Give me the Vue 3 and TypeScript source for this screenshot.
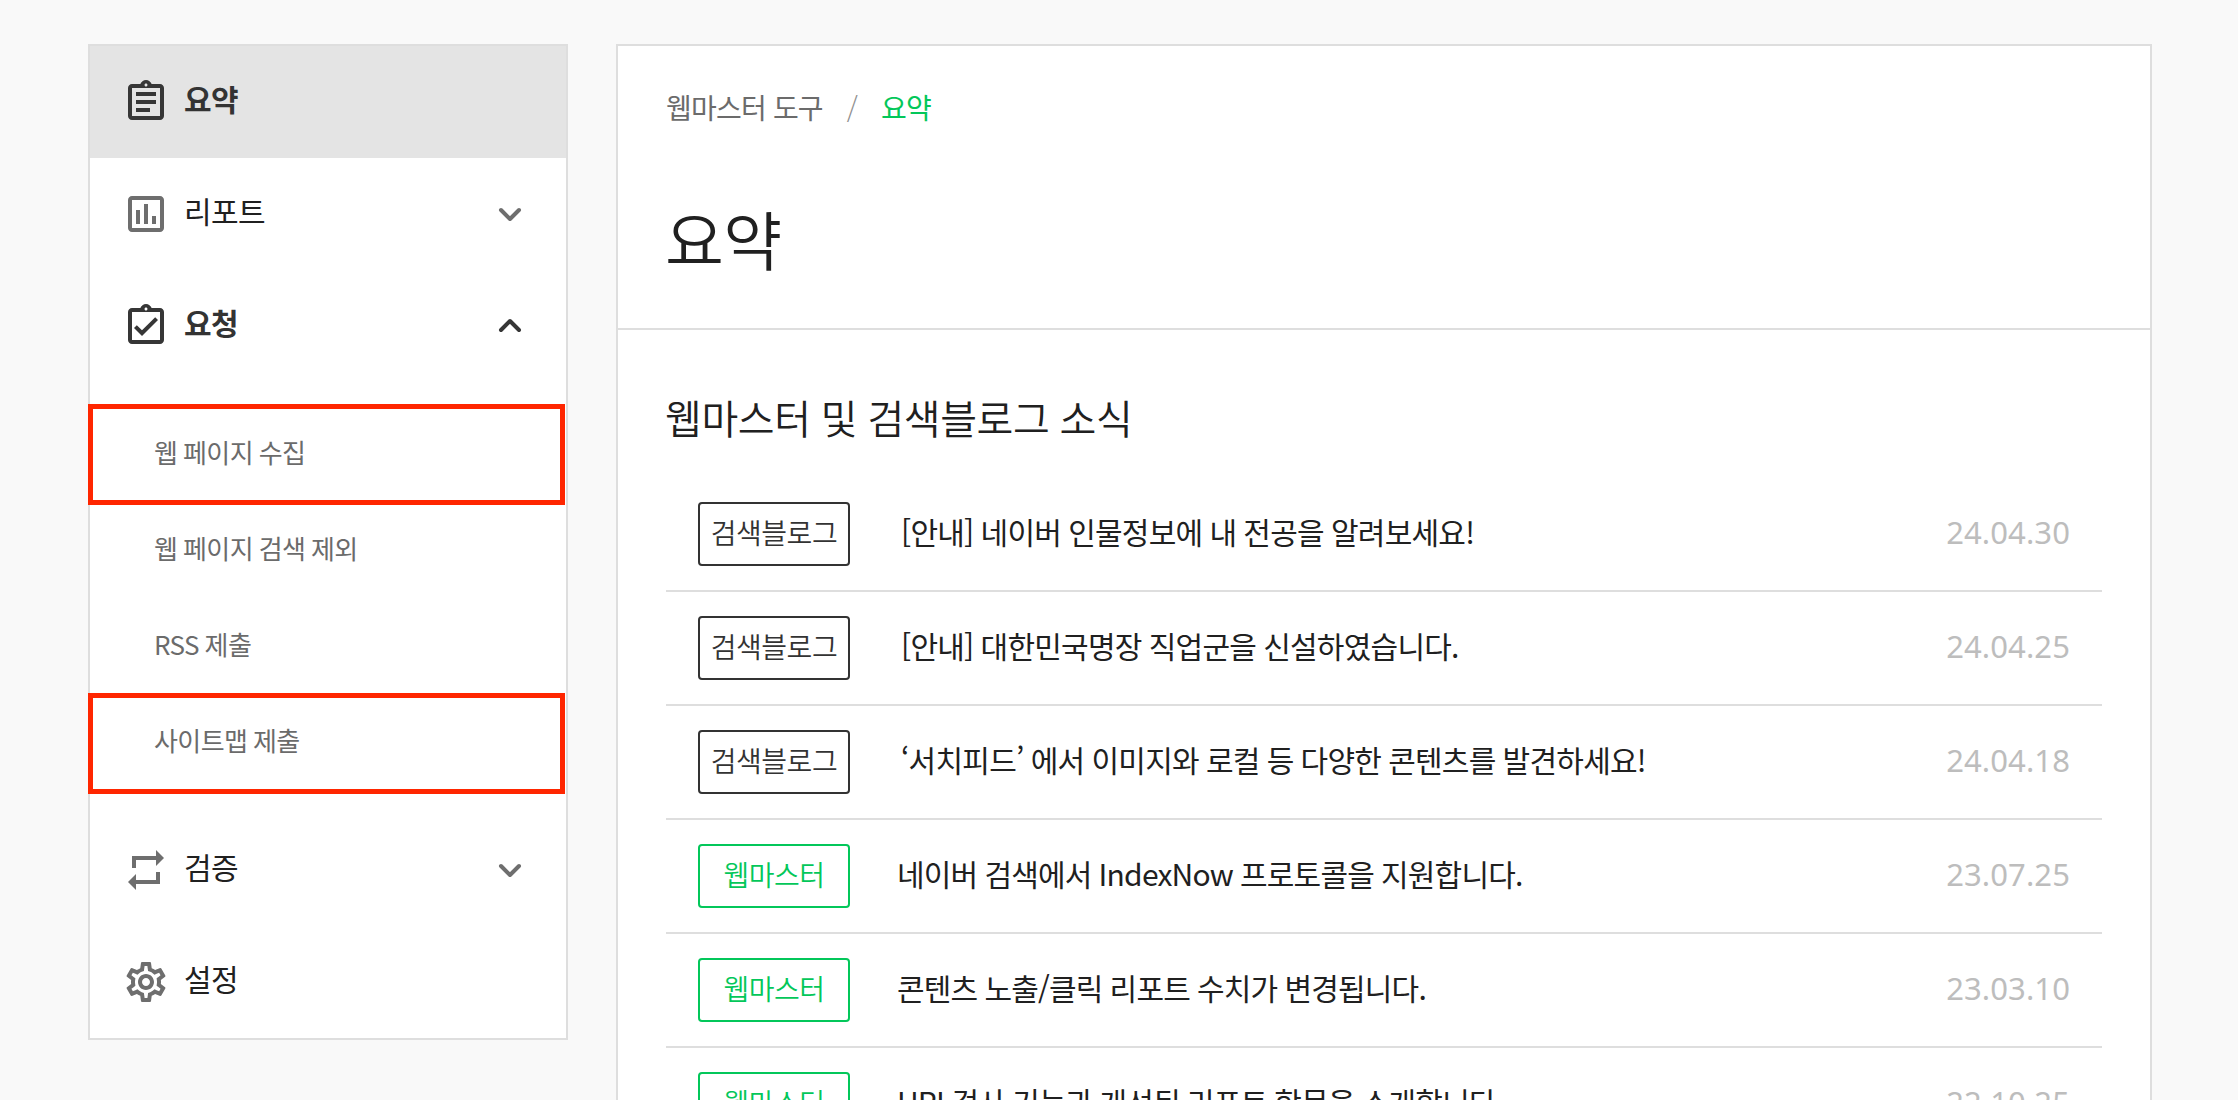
<script setup lang="ts">
import { ref } from 'vue';

type IconName = 'summary' | 'report' | 'request' | 'verify' | 'settings';

interface SubItem {
  label: string;
  mark?: 'first' | 'last';
}

interface MenuItem {
  icon: IconName;
  label: string;
  expandable?: boolean;
  children?: SubItem[];
}

interface NewsItem {
  kind: 'blog' | 'master';
  title: string;
  date: string;
}

const icons: Record<IconName, string> = {
  summary: 'M7 15h7v2H7zm0-4h10v2H7zm0-4h10v2H7zm12-4h-4.18C14.4 1.84 13.3 1 12 1c-1.3 0-2.4.84-2.82 2H5c-1.1 0-2 .9-2 2v14c0 1.1.9 2 2 2h14c1.1 0 2-.9 2-2V5c0-1.1-.9-2-2-2zm-7-.25c.41 0 .75.34.75.75s-.34.75-.75.75-.75-.34-.75-.75.34-.75.75-.75zM19 19H5V5h14v14z',
  report: 'M19 3H5c-1.1 0-2 .9-2 2v14c0 1.1.9 2 2 2h14c1.1 0 2-.9 2-2V5c0-1.1-.9-2-2-2zm0 16H5V5h14v14zM7 10h2v7H7zm4-3h2v10h-2zm4 6h2v4h-2z',
  request: 'M19 3h-4.18C14.4 1.84 13.3 1 12 1c-1.3 0-2.4.84-2.82 2H5c-1.1 0-2 .9-2 2v14c0 1.1.9 2 2 2h14c1.1 0 2-.9 2-2V5c0-1.1-.9-2-2-2zm-7-.25c.41 0 .75.34.75.75s-.34.75-.75.75-.75-.34-.75-.75.34-.75.75-.75zM19 19H5V5h14v14zM16.59 7.58L10 14.17l-2.59-2.58L6 13l4 4 8-8z',
  verify: 'M7 7h10v3l4-4-4-4v3H5v6h2V7zm10 10H7v-3l-4 4 4 4v-3h12v-6h-2v4z',
  settings: 'M19.43 12.98c.04-.32.07-.64.07-.98 0-.34-.03-.66-.07-.98l2.11-1.65c.19-.15.24-.42.12-.64l-2-3.46c-.09-.16-.26-.25-.44-.25-.06 0-.12.01-.17.03l-2.49 1c-.52-.4-1.08-.73-1.69-.98l-.38-2.65C14.46 2.18 14.25 2 14 2h-4c-.25 0-.46.18-.49.42l-.38 2.65c-.61.25-1.17.59-1.69.98l-2.49-1c-.06-.02-.12-.03-.18-.03-.17 0-.34.09-.43.25l-2 3.46c-.13.22-.07.49.12.64l2.11 1.65c-.04.32-.07.65-.07.98 0 .33.03.66.07.98l-2.11 1.65c-.19.15-.24.42-.12.64l2 3.46c.09.16.26.25.44.25.06 0 .12-.01.17-.03l2.49-1c.52.4 1.08.73 1.69.98l.38 2.65c.03.24.24.42.49.42h4c.25 0 .46-.18.49-.42l.38-2.65c.61-.25 1.17-.59 1.69-.98l2.49 1c.06.02.12.03.18.03.17 0 .34-.09.43-.25l2-3.46c.12-.22.07-.49-.12-.64l-2.11-1.65zm-1.98-1.71c.04.31.05.52.05.73 0 .21-.02.43-.05.73l-.14 1.13.89.7 1.08.84-.7 1.21-1.27-.51-1.04-.42-.9.68c-.43.32-.84.56-1.25.73l-1.06.43-.16 1.13-.2 1.35h-1.4l-.19-1.35-.16-1.13-1.06-.43c-.43-.18-.83-.41-1.23-.71l-.91-.7-1.06.43-1.27.51-.7-1.21 1.08-.84.89-.7-.14-1.13c-.03-.31-.05-.54-.05-.74s.02-.43.05-.73l.14-1.13-.89-.7-1.08-.84.7-1.21 1.27.51 1.04.42.9-.68c.43-.32.84-.56 1.25-.73l1.06-.43.16-1.13.2-1.35h1.39l.19 1.35.16 1.13 1.06.43c.43.18.83.41 1.23.71l.91.7 1.06-.43 1.27-.51.7 1.21-1.07.85-.89.7.14 1.13zM12 8c-2.21 0-4 1.79-4 4s1.79 4 4 4 4-1.79 4-4-1.79-4-4-4zm0 6c-1.1 0-2-.9-2-2s.9-2 2-2 2 .9 2 2-.9 2-2 2z'
};

const menu: MenuItem[] = [
  { icon: 'summary', label: '요약' },
  { icon: 'report', label: '리포트', expandable: true },
  {
    icon: 'request',
    label: '요청',
    expandable: true,
    children: [
      { label: '웹 페이지 수집', mark: 'first' },
      { label: '웹 페이지 검색 제외' },
      { label: 'RSS 제출' },
      { label: '사이트맵 제출', mark: 'last' }
    ]
  },
  { icon: 'verify', label: '검증', expandable: true },
  { icon: 'settings', label: '설정' }
];

const news: NewsItem[] = [
  { kind: 'blog', title: '[안내] 네이버 인물정보에 내 전공을 알려보세요!', date: '24.04.30' },
  { kind: 'blog', title: '[안내] 대한민국명장 직업군을 신설하였습니다.', date: '24.04.25' },
  { kind: 'blog', title: '‘서치피드’ 에서 이미지와 로컬 등 다양한 콘텐츠를 발견하세요!', date: '24.04.18' },
  { kind: 'master', title: '네이버 검색에서 IndexNow 프로토콜을 지원합니다.', date: '23.07.25' },
  { kind: 'master', title: '콘텐츠 노출/클릭 리포트 수치가 변경됩니다.', date: '23.03.10' },
  { kind: 'master', title: 'URL검사 기능과 개선된 리포트 항목을 소개합니다.', date: '22.10.25' }
];

const kindLabels = {
  blog: '검색블로그',
  master: '웹마스터'
};

const current = ref<IconName>('summary');
const opened = ref<IconName | null>('request');

const handleSelect = (item: MenuItem) => {
  if (item.expandable) {
    opened.value = opened.value === item.icon ? null : item.icon;
    return;
  }
  current.value = item.icon;
};
</script>

<template>
  <div class="page" lang="ko">
    <nav class="sidebar">
      <template v-for="item in menu" :key="item.icon">
        <div
          class="menu-item"
          :class="{
            'menu-item--current': current === item.icon,
            'menu-item--open': opened === item.icon
          }"
          @click="handleSelect(item)"
        >
          <svg class="menu-item__icon" viewBox="0 0 24 24" aria-hidden="true">
            <path :d="icons[item.icon]" />
          </svg>
          <span class="menu-item__label">{{ item.label }}</span>
          <svg v-if="item.expandable" class="menu-item__arrow" viewBox="0 0 24 24" aria-hidden="true">
            <path v-if="opened === item.icon" d="M3 16l9-9 9 9" />
            <path v-else d="M3 8l9 9 9-9" />
          </svg>
        </div>
        <ul v-if="item.children && opened === item.icon" class="submenu">
          <li
            v-for="child in item.children"
            :key="child.label"
            class="submenu__item"
            :class="child.mark && `submenu__item--${child.mark}`"
          >
            <span class="submenu__label">{{ child.label }}</span>
          </li>
        </ul>
      </template>
    </nav>

    <main class="content">
      <header class="content__header">
        <div class="breadcrumb">
          <span>웹마스터 도구</span>
          <span class="breadcrumb__slash">/</span>
          <span class="breadcrumb__current">요약</span>
        </div>
        <h1 class="content__title">요약</h1>
      </header>
      <section class="news">
        <h2 class="news__title">웹마스터 및 검색블로그 소식</h2>
        <ul class="news__list">
          <li v-for="item in news" :key="item.title" class="news__row">
            <span class="badge" :class="`badge--${item.kind}`">{{ kindLabels[item.kind] }}</span>
            <span class="news__text" :class="`news__text--${item.kind}`">{{ item.title }}</span>
            <time class="news__date">{{ item.date }}</time>
          </li>
        </ul>
      </section>
    </main>
  </div>
</template>

<style>
body {
  margin: 0;
  background: #f9f9f9;
}
</style>

<style scoped>
.page {
  box-sizing: border-box;
  display: flex;
  align-items: flex-start;
  gap: 48px;
  width: 2238px;
  height: 1100px;
  padding: 44px 86px 0 88px;
  overflow: hidden;
  background: #f9f9f9;
  color: #202020;
  font-family: "Noto Sans CJK KR", "Noto Sans", sans-serif;
}

ul {
  margin: 0;
  padding: 0;
  list-style: none;
}

/* Sidebar */
.sidebar {
  box-sizing: border-box;
  flex: none;
  width: 480px;
  border: 2px solid #dedede;
  background: #fff;
}

.menu-item {
  box-sizing: border-box;
  display: flex;
  align-items: center;
  height: 112px;
  padding: 0 44px 0 32px;
  cursor: pointer;
}

.menu-item--current {
  background: #e4e4e4;
}

.menu-item__icon {
  width: 48px;
  height: 48px;
  fill: #6e6e6e;
}

.menu-item__label {
  flex: 1;
  padding-bottom: 8px;
  margin-left: 14px;
  font-size: 30px;
  line-height: 40px;
  letter-spacing: -0.6px;
}

.menu-item__arrow {
  width: 24px;
  height: 24px;
  fill: none;
  stroke: #6e6e6e;
  stroke-width: 4;
  stroke-linecap: round;
  stroke-linejoin: round;
}

.menu-item--current .menu-item__icon,
.menu-item--open .menu-item__icon {
  fill: #363636;
}

.menu-item--current .menu-item__label,
.menu-item--open .menu-item__label {
  color: #333;
  font-weight: 700;
}

.menu-item--open .menu-item__arrow {
  stroke: #363636;
}

.submenu {
  padding: 24px 0;
}

.submenu__item {
  position: relative;
  display: flex;
  align-items: center;
  height: 96px;
  padding-left: 64px;
  color: #6b6b6b;
  font-size: 26px;
  letter-spacing: -0.6px;
  word-spacing: -1px;
}

.submenu__label {
  padding-bottom: 4px;
  line-height: 36px;
}

/* Red frame around the highlighted entries */
.submenu__item--first::after,
.submenu__item--last::after {
  content: "";
  position: absolute;
  top: -2px;
  right: 1px;
  bottom: -3px;
  left: -2px;
  border: 5px solid #ff2600;
}

.submenu__item--last::after {
  top: -1px;
  bottom: -4px;
}

/* Content */
.content {
  box-sizing: border-box;
  flex: 1;
  min-height: 1200px;
  border: 2px solid #dedede;
  background: #fff;
}

.content__header {
  box-sizing: border-box;
  height: 284px;
  padding: 41px 48px 0;
  border-bottom: 2px solid #dedede;
}

.breadcrumb {
  display: flex;
  height: 40px;
  color: #6b6b6b;
  font-size: 28px;
  line-height: 40px;
  letter-spacing: -0.8px;
}

.breadcrumb__slash {
  margin: 0 24px;
  color: #909090;
  font-weight: 300;
}

.breadcrumb__current {
  color: #03c75a;
}

.content__title {
  margin: 64px 0 0 -1px;
  font-size: 64px;
  font-weight: 350;
  line-height: 92px;
  letter-spacing: -0.6px;
}

.news {
  padding: 58px 48px 0;
}

.news__title {
  margin: 0 0 0 -1px;
  font-size: 40px;
  font-weight: 350;
  line-height: 58px;
  letter-spacing: -0.4px;
  word-spacing: -0.6px;
}

.news__list {
  margin-top: 32px;
}

.news__row {
  box-sizing: border-box;
  display: flex;
  align-items: center;
  height: 114px;
  padding: 0 32px;
  border-bottom: 2px solid #dedede;
}

.badge {
  box-sizing: border-box;
  flex: none;
  width: 152px;
  height: 64px;
  border: 2px solid #333;
  border-radius: 4px;
  color: #333;
  font-size: 28px;
  font-weight: 350;
  line-height: 56px;
  letter-spacing: -0.5px;
  text-align: center;
}

.badge--master {
  border-color: #03c75a;
  color: #03c75a;
}

.news__text {
  flex: 1;
  margin-left: 47px;
  padding-bottom: 6px;
  font-size: 30px;
  line-height: 44px;
  letter-spacing: -0.8px;
  word-spacing: -0.6px;
  white-space: nowrap;
}

.news__text--blog {
  margin-left: 51px;
  letter-spacing: -0.75px;
}

.news__date {
  padding-bottom: 4px;
  color: #bdbdbd;
  font-family: "Noto Sans", sans-serif;
  font-size: 31px;
  font-weight: 400;
  line-height: 44px;
  letter-spacing: 0.1px;
}
</style>
